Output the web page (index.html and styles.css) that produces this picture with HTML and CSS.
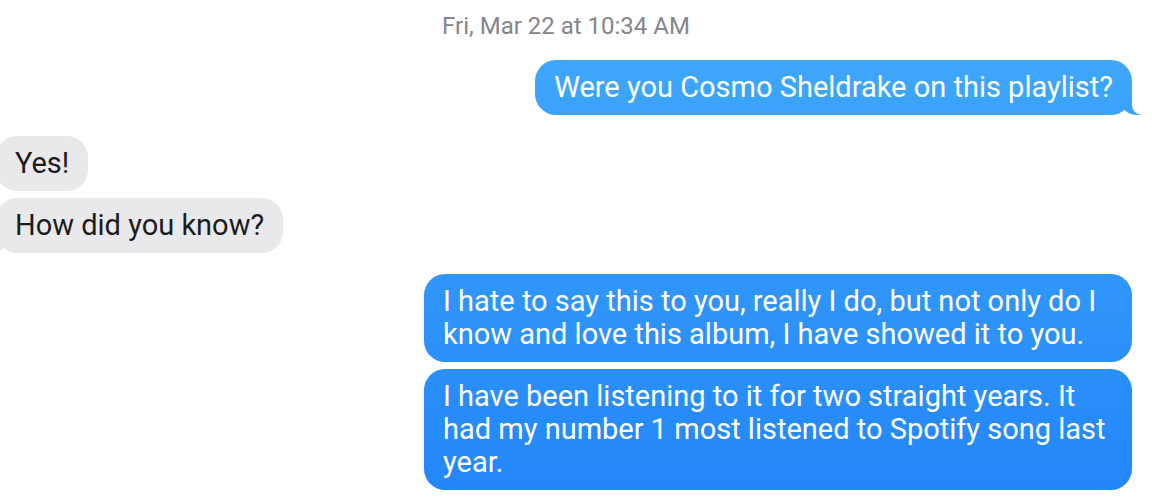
FILE: index.html
```html
<!DOCTYPE html>
<html>
<head>
  <title>Messages</title>
  <link rel="stylesheet" href="styles.css">
</head>
<body>
  <div class="thread">
    <div class="stamp">Fri, Mar 22 at 10:34 AM</div>

    <div class="msg sent tail">Were you Cosmo Sheldrake on this playlist?</div>

    <div class="group">
      <div class="msg recv">Yes!</div>
      <div class="msg recv tail">How did you know?</div>
    </div>

    <div class="group">
      <div class="msg sent">I hate to say this to you, really I do, but not only do I know and love this album, I have showed it to you.</div>
      <div class="msg sent">I have been listening to it for two straight years. It had my number 1 most listened to Spotify song last year.</div>
    </div>
  </div>
</body>
</html>
```

FILE: styles.css
```css
body {
  margin: 0;
  background: #ffffff;
  font-family: "Roboto", "Noto Sans", sans-serif;
  overflow: hidden;
}
.thread {
  display: flex;
  flex-direction: column;
  gap: 21px;
  padding: 14px 20px 0 0;
}
.stamp {
  align-self: center;
  color: #86868a;
  font-size: 24px;
  line-height: 25px;
}
.group {
  display: flex;
  flex-direction: column;
  gap: 7px;
}
.msg {
  position: relative;
  max-width: 670px;
  padding: 11px 19px;
  border-radius: 21px;
  font-size: 29px;
  line-height: 33px;
}
.sent {
  align-self: flex-end;
  color: #fff;
  background: linear-gradient(#42abfc, #2286f8) fixed;
}
.recv {
  align-self: flex-start;
  margin-left: -4px;
  color: #1c1c1e;
  background: #e9e9eb;
}
.msg.tail::before,
.msg.tail::after {
  content: "";
  position: absolute;
  bottom: 0;
  height: 20px;
}
.sent.tail::before {
  right: -9px;
  width: 20px;
  background: linear-gradient(#42abfc, #2286f8) fixed;
  border-bottom-left-radius: 16px 14px;
}
.sent.tail::after {
  right: -26px;
  width: 26px;
  background: #fff;
  border-bottom-left-radius: 10px;
}
.recv.tail::before {
  left: -9px;
  width: 20px;
  background: #e9e9eb;
  border-bottom-right-radius: 16px 14px;
}
.recv.tail::after {
  left: -26px;
  width: 26px;
  background: #fff;
  border-bottom-right-radius: 10px;
}
```
